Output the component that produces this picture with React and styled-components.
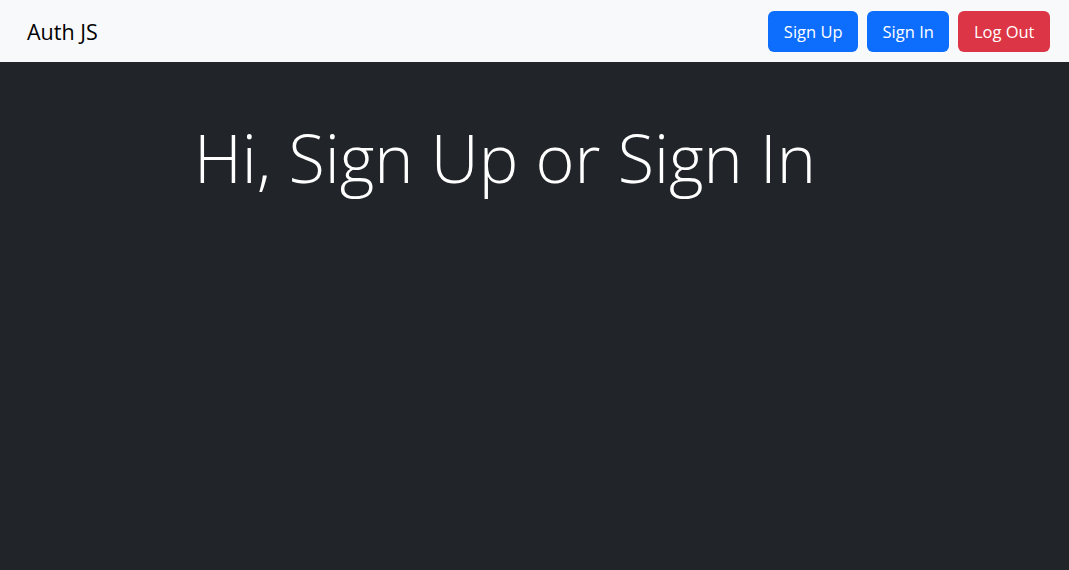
import React from 'react'
import styled, { createGlobalStyle } from 'styled-components'

const GlobalStyle = createGlobalStyle`
  html, body {
    margin: 0;
    padding: 0;
    height: 100%;
    background-color: #212529;
  }
  body {
    font-family: "Open Sans", "Noto Sans", sans-serif;
  }
  #root {
    min-height: 100%;
  }
`

const Page = styled.div`
  min-height: 100vh;
  background-color: #212529;
  display: flex;
  flex-direction: column;
`

const Navbar = styled.nav`
  height: 62px;
  box-sizing: border-box;
  background-color: #f8f9fa;
  display: flex;
  align-items: center;
  justify-content: space-between;
  padding: 0 19px 0 27px;
`

const Brand = styled.div`
  font-size: 21.5px;
  color: #000;
  font-weight: 400;
`

const ButtonGroup = styled.div`
  display: flex;
  gap: 9px;
`

const Button = styled.button`
  height: 41px;
  padding: 0 15.5px;
  border: none;
  border-radius: 6px;
  font-family: "Open Sans", "Noto Sans", sans-serif;
  font-size: 16.5px;
  color: #fff;
  background-color: ${p => (p.variant === 'danger' ? '#dc3545' : '#0d6efd')};
  cursor: pointer;
`

const Main = styled.main`
  padding: 62px 0 0 194px;
`

const Heading = styled.h1`
  margin: 0;
  font-size: 66.5px;
  font-weight: 300;
  line-height: 1;
  color: #fff;
`

export default function App() {
  return (
    <Page>
      <GlobalStyle />
      <Navbar>
        <Brand>Auth JS</Brand>
        <ButtonGroup>
          <Button>Sign Up</Button>
          <Button>Sign In</Button>
          <Button variant="danger">Log Out</Button>
        </ButtonGroup>
      </Navbar>
      <Main>
        <Heading>Hi, Sign Up or Sign In</Heading>
      </Main>
    </Page>
  )
}
